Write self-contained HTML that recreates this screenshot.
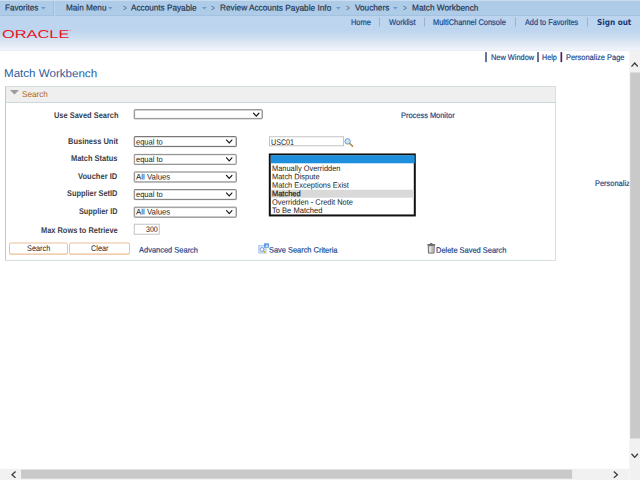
<!DOCTYPE html>
<html><head><meta charset="utf-8"><title>Match Workbench</title>
<style>
*{box-sizing:border-box;margin:0;padding:0}
html,body{width:640px;height:480px;overflow:hidden;background:#fff}
body{position:relative;font-family:"Liberation Sans",Arial,sans-serif}
.a{position:absolute;white-space:nowrap}
</style></head><body>
<div class="a" style="left:0;top:0;width:640px;height:51px;background:linear-gradient(#bcd4ed 0,#bdd5ee 30px,#c9dcf0 36px,#dce6f4 42px,#eaeff8 47px,#f0f3fa 50px,#e6e9ee 51px)"></div>
<div class="a" style="left:0;top:0;width:640px;height:16px;background:#aecbe8;border-top:1px solid #c9dcf0;border-bottom:1px solid #a3c2e2"></div>
<div class="a" style="left:5.40px;top:2px;font:8.7px/10px 'Liberation Sans',Arial,sans-serif;color:#24344c;transform:translateY(0.60px) rotate(0.03deg) scaleX(0.9341);transform-origin:0 0;-webkit-text-stroke:0.18px #24344c;">Favorites</div>
<div class="a" style="left:65.70px;top:2px;font:8.7px/10px 'Liberation Sans',Arial,sans-serif;color:#24344c;transform:translateY(0.60px) rotate(0.03deg) scaleX(0.9414);transform-origin:0 0;-webkit-text-stroke:0.18px #24344c;">Main Menu</div>
<div class="a" style="left:131.30px;top:2px;font:8.7px/10px 'Liberation Sans',Arial,sans-serif;color:#24344c;transform:translateY(0.60px) rotate(0.03deg) scaleX(0.9434);transform-origin:0 0;-webkit-text-stroke:0.18px #24344c;">Accounts Payable</div>
<div class="a" style="left:220.40px;top:2px;font:8.7px/10px 'Liberation Sans',Arial,sans-serif;color:#24344c;transform:translateY(0.60px) rotate(0.03deg) scaleX(0.9520);transform-origin:0 0;-webkit-text-stroke:0.18px #24344c;">Review Accounts Payable Info</div>
<div class="a" style="left:354.90px;top:2px;font:8.7px/10px 'Liberation Sans',Arial,sans-serif;color:#24344c;transform:translateY(0.60px) rotate(0.03deg) scaleX(0.9455);transform-origin:0 0;-webkit-text-stroke:0.18px #24344c;">Vouchers</div>
<div class="a" style="left:411.80px;top:2px;font:8.7px/10px 'Liberation Sans',Arial,sans-serif;color:#24344c;transform:translateY(0.60px) rotate(0.03deg) scaleX(0.9507);transform-origin:0 0;-webkit-text-stroke:0.18px #24344c;">Match Workbench</div>
<div class="a" style="left:122.50px;top:2px;font:9.4px/11px 'Liberation Sans',Arial,sans-serif;color:#55657c;transform:translateY(0.20px) rotate(0.03deg) scaleX(0.6728);transform-origin:0 0;">&gt;</div>
<div class="a" style="left:211.10px;top:2px;font:9.4px/11px 'Liberation Sans',Arial,sans-serif;color:#55657c;transform:translateY(0.20px) rotate(0.03deg) scaleX(0.6728);transform-origin:0 0;">&gt;</div>
<div class="a" style="left:345.60px;top:2px;font:9.4px/11px 'Liberation Sans',Arial,sans-serif;color:#55657c;transform:translateY(0.20px) rotate(0.03deg) scaleX(0.6728);transform-origin:0 0;">&gt;</div>
<div class="a" style="left:402.90px;top:2px;font:9.4px/11px 'Liberation Sans',Arial,sans-serif;color:#55657c;transform:translateY(0.20px) rotate(0.03deg) scaleX(0.6728);transform-origin:0 0;">&gt;</div>
<svg class="a" style="left:40.6px;top:6.7px" width="5" height="3" viewBox="0 0 5 3"><path d="M0 0H4.6L2.3 2.4Z" fill="#6a9bd0"/></svg>
<svg class="a" style="left:108.4px;top:6.7px" width="5" height="3" viewBox="0 0 5 3"><path d="M0 0H4.6L2.3 2.4Z" fill="#6a9bd0"/></svg>
<svg class="a" style="left:201.5px;top:6.7px" width="5" height="3" viewBox="0 0 5 3"><path d="M0 0H4.6L2.3 2.4Z" fill="#6a9bd0"/></svg>
<svg class="a" style="left:336.0px;top:6.7px" width="5" height="3" viewBox="0 0 5 3"><path d="M0 0H4.6L2.3 2.4Z" fill="#6a9bd0"/></svg>
<svg class="a" style="left:393.2px;top:6.7px" width="5" height="3" viewBox="0 0 5 3"><path d="M0 0H4.6L2.3 2.4Z" fill="#6a9bd0"/></svg>
<div class="a" style="left:0;top:0;transform:translate(53.1px,1px);width:1px;height:15px;background:#9fbfe0;"></div>
<div class="a" style="left:0;top:0;transform:translate(54.1px,1px);width:1px;height:15px;background:#bdd5ee;"></div>
<div class="a" style="left:351.20px;top:16px;font:8.4px/10px 'Liberation Sans',Arial,sans-serif;color:#174487;transform:translateY(0.50px) rotate(0.03deg) scaleX(0.8873);transform-origin:0 0;-webkit-text-stroke:0.18px #174487;">Home</div>
<div class="a" style="left:388.50px;top:16px;font:8.4px/10px 'Liberation Sans',Arial,sans-serif;color:#174487;transform:translateY(0.50px) rotate(0.03deg) scaleX(0.8992);transform-origin:0 0;-webkit-text-stroke:0.18px #174487;">Worklist</div>
<div class="a" style="left:433.40px;top:16px;font:8.4px/10px 'Liberation Sans',Arial,sans-serif;color:#174487;transform:translateY(0.50px) rotate(0.03deg) scaleX(0.8881);transform-origin:0 0;-webkit-text-stroke:0.18px #174487;">MultiChannel Console</div>
<div class="a" style="left:524.80px;top:16px;font:8.4px/10px 'Liberation Sans',Arial,sans-serif;color:#174487;transform:translateY(0.50px) rotate(0.03deg) scaleX(0.8732);transform-origin:0 0;-webkit-text-stroke:0.18px #174487;">Add to Favorites</div>
<div class="a" style="left:596.90px;top:16px;font:bold 8.2px/10px 'DejaVu Sans',sans-serif;color:#143c78;transform:translateY(0.50px) rotate(0.03deg) scaleX(0.8897);transform-origin:0 0;">Sign out</div>
<div class="a" style="left:0;top:0;transform:translate(379px,17.5px);width:1px;height:8.5px;background:#a3b1c6;"></div>
<div class="a" style="left:0;top:0;transform:translate(424px,17.5px);width:1px;height:8.5px;background:#a3b1c6;"></div>
<div class="a" style="left:0;top:0;transform:translate(515px,17.5px);width:1px;height:8.5px;background:#a3b1c6;"></div>
<div class="a" style="left:0;top:0;transform:translate(587px,17.5px);width:1px;height:8.5px;background:#a3b1c6;"></div>
<div class="a" style="left:2.30px;top:27px;font:11.3px/12px 'Liberation Sans',Arial,sans-serif;color:#e9121f;transform:translateY(0.90px) rotate(0.03deg) scaleX(1.4491);transform-origin:0 0;">ORACLE</div>
<div class="a" style="left:70px;top:30px;width:1px;height:1px;background:#ee7a86;"></div>
<div class="a" style="left:490.60px;top:52px;font:8.1px/9px 'Liberation Sans',Arial,sans-serif;color:#174487;transform:translateY(0.75px) rotate(0.03deg) scaleX(0.9122);transform-origin:0 0;-webkit-text-stroke:0.18px #174487;">New Window</div>
<div class="a" style="left:542.30px;top:52px;font:8.1px/9px 'Liberation Sans',Arial,sans-serif;color:#174487;transform:translateY(0.75px) rotate(0.03deg) scaleX(0.8831);transform-origin:0 0;-webkit-text-stroke:0.18px #174487;">Help</div>
<div class="a" style="left:565.75px;top:52px;font:8.1px/9px 'Liberation Sans',Arial,sans-serif;color:#174487;transform:translateY(0.75px) rotate(0.03deg) scaleX(0.9212);transform-origin:0 0;-webkit-text-stroke:0.18px #174487;">Personalize Page</div>
<div class="a" style="left:0;top:0;transform:translate(485.0px,52.1px);width:1.6px;height:9.5px;background:linear-gradient(90deg,#d79a63,#5a4a55 45%,#5a4a55 55%,#7aa6dc);"></div>
<div class="a" style="left:0;top:0;transform:translate(537.0px,52.1px);width:1.6px;height:9.5px;background:linear-gradient(90deg,#d79a63,#5a4a55 45%,#5a4a55 55%,#7aa6dc);"></div>
<div class="a" style="left:0;top:0;transform:translate(560.3px,52.1px);width:1.6px;height:9.5px;background:linear-gradient(90deg,#a0708a,#3a1a5a 45%,#3a1a5a 55%,#7a78c0);"></div>
<div class="a" style="left:3.75px;top:67px;font:11.4px/12px 'Liberation Sans',Arial,sans-serif;color:#2d5c9c;transform:translateY(0.10px) rotate(0.03deg) scaleX(1.0163);transform-origin:0 0;">Match Workbench</div>
<div class="a" style="left:5px;top:86px;width:551px;height:175px;border:1px solid #d5dfe2;border-left-color:#bccbd8;background:#fff"></div>
<div class="a" style="left:6px;top:87px;width:549px;height:16px;background:#efefef;border-bottom:1px solid #cbd8dc"></div>
<svg class="a" style="left:10.4px;top:90.1px" width="9" height="5" viewBox="0 0 9 5"><path d="M0 0H9L4.5 4.6Z" fill="#9b9b9b"/></svg>
<div class="a" style="left:22.20px;top:89px;font:8.4px/10px 'Liberation Sans',Arial,sans-serif;color:#b4641c;transform:translateY(0.10px) rotate(0.03deg) scaleX(0.9727);transform-origin:0 0;">Search</div>
<div class="a" style="left:53.75px;top:110px;font:bold 8.3px/10px 'Liberation Sans',Arial,sans-serif;color:#3a3e48;transform:translateY(0.00px) rotate(0.03deg) scaleX(0.8963);transform-origin:0 0;">Use Saved Search</div>
<div class="a" style="left:67.50px;top:135px;font:bold 8.3px/10px 'Liberation Sans',Arial,sans-serif;color:#3a3e48;transform:translateY(0.75px) rotate(0.03deg) scaleX(0.9032);transform-origin:0 0;">Business Unit</div>
<div class="a" style="left:70.75px;top:153px;font:bold 8.3px/10px 'Liberation Sans',Arial,sans-serif;color:#3a3e48;transform:translateY(0.25px) rotate(0.03deg) scaleX(0.8990);transform-origin:0 0;">Match Status</div>
<div class="a" style="left:78.00px;top:171px;font:bold 8.3px/10px 'Liberation Sans',Arial,sans-serif;color:#3a3e48;transform:translateY(0.00px) rotate(0.03deg) scaleX(0.9074);transform-origin:0 0;">Voucher ID</div>
<div class="a" style="left:66.75px;top:188px;font:bold 8.3px/10px 'Liberation Sans',Arial,sans-serif;color:#3a3e48;transform:translateY(0.25px) rotate(0.03deg) scaleX(0.8893);transform-origin:0 0;">Supplier SetID</div>
<div class="a" style="left:78.75px;top:206px;font:bold 8.3px/10px 'Liberation Sans',Arial,sans-serif;color:#3a3e48;transform:translateY(0.00px) rotate(0.03deg) scaleX(0.8774);transform-origin:0 0;">Supplier ID</div>
<div class="a" style="left:40.75px;top:224px;font:bold 8.3px/10px 'Liberation Sans',Arial,sans-serif;color:#3a3e48;transform:translateY(0.75px) rotate(0.03deg) scaleX(0.8947);transform-origin:0 0;">Max Rows to Retrieve</div>
<div class="a" style="left:0;top:0;transform:translate(133.75px,109.25px);width:129.3px;height:10.4px;border:1px solid #7b7b7b;border-radius:1px;background:#fff;box-shadow:inset 0 0 0 0.5px #d8d8d8"><svg style="position:absolute;right:2.2px;top:2.0px" width="7" height="5" viewBox="0 0 7 5"><path d="M0.4 0.5L3.5 3.9L6.6 0.5" fill="none" stroke="#1a1a1a" stroke-width="1.15"/></svg></div>
<div class="a" style="left:0;top:0;transform:translate(133.75px,136.1px);width:102.5px;height:10.7px;border:1px solid #6a6a6a;border-radius:1px;background:#fff;box-shadow:inset 0 0 0 0.5px #d8d8d8"><svg style="position:absolute;right:2.2px;top:2.0px" width="7" height="5" viewBox="0 0 7 5"><path d="M0.4 0.5L3.5 3.9L6.6 0.5" fill="none" stroke="#1a1a1a" stroke-width="1.15"/></svg></div>
<div class="a" style="left:136.20px;top:137px;font:8.0px/9px 'Liberation Sans',Arial,sans-serif;color:#222;transform:translateY(0.50px) rotate(0.03deg) scaleX(0.9410);transform-origin:0 0;">equal to</div>
<div class="a" style="left:0;top:0;transform:translate(133.75px,153.9px);width:102.5px;height:10.7px;border:1px solid #8a8a8a;border-radius:1px;background:#fff;box-shadow:inset 0 0 0 0.5px #d8d8d8"><svg style="position:absolute;right:2.2px;top:2.0px" width="7" height="5" viewBox="0 0 7 5"><path d="M0.4 0.5L3.5 3.9L6.6 0.5" fill="none" stroke="#1a1a1a" stroke-width="1.15"/></svg></div>
<div class="a" style="left:136.20px;top:154px;font:8.0px/9px 'Liberation Sans',Arial,sans-serif;color:#222;transform:translateY(0.90px) rotate(0.03deg) scaleX(0.9410);transform-origin:0 0;">equal to</div>
<div class="a" style="left:0;top:0;transform:translate(133.75px,171.5px);width:102.5px;height:10.7px;border:1px solid #7b7b7b;border-radius:1px;background:#fff;box-shadow:inset 0 0 0 0.5px #d8d8d8"><svg style="position:absolute;right:2.2px;top:2.0px" width="7" height="5" viewBox="0 0 7 5"><path d="M0.4 0.5L3.5 3.9L6.6 0.5" fill="none" stroke="#1a1a1a" stroke-width="1.15"/></svg></div>
<div class="a" style="left:136.20px;top:172px;font:8.0px/9px 'Liberation Sans',Arial,sans-serif;color:#222;transform:translateY(0.40px) rotate(0.03deg) scaleX(0.9800);transform-origin:0 0;">All Values</div>
<div class="a" style="left:0;top:0;transform:translate(133.75px,189.1px);width:102.5px;height:10.7px;border:1px solid #7b7b7b;border-radius:1px;background:#fff;box-shadow:inset 0 0 0 0.5px #d8d8d8"><svg style="position:absolute;right:2.2px;top:2.0px" width="7" height="5" viewBox="0 0 7 5"><path d="M0.4 0.5L3.5 3.9L6.6 0.5" fill="none" stroke="#1a1a1a" stroke-width="1.15"/></svg></div>
<div class="a" style="left:136.20px;top:189px;font:8.0px/9px 'Liberation Sans',Arial,sans-serif;color:#222;transform:translateY(0.90px) rotate(0.03deg) scaleX(0.9410);transform-origin:0 0;">equal to</div>
<div class="a" style="left:0;top:0;transform:translate(133.75px,206.7px);width:102.5px;height:10.7px;border:1px solid #7b7b7b;border-radius:1px;background:#fff;box-shadow:inset 0 0 0 0.5px #d8d8d8"><svg style="position:absolute;right:2.2px;top:2.0px" width="7" height="5" viewBox="0 0 7 5"><path d="M0.4 0.5L3.5 3.9L6.6 0.5" fill="none" stroke="#1a1a1a" stroke-width="1.15"/></svg></div>
<div class="a" style="left:136.20px;top:207px;font:8.0px/9px 'Liberation Sans',Arial,sans-serif;color:#222;transform:translateY(0.40px) rotate(0.03deg) scaleX(0.9800);transform-origin:0 0;">All Values</div>
<div class="a" style="left:0;top:0;transform:translate(133.75px,223.75px);width:26.4px;height:10.5px;border:1px solid #c4c4c4;background:#fff"></div>
<div class="a" style="left:145.75px;top:224px;font:8.0px/9px 'Liberation Sans',Arial,sans-serif;color:#222;transform:translateY(0.70px) rotate(0.03deg) scaleX(0.8795);transform-origin:0 0;">300</div>
<div class="a" style="left:0;top:0;transform:translate(269px,136.25px);width:74.8px;height:10.4px;border:1px solid #c4c4c4;background:#fff"></div>
<div class="a" style="left:270.50px;top:137px;font:8.2px/9px 'Liberation Sans',Arial,sans-serif;color:#222;transform:translateY(0.70px) rotate(0.03deg) scaleX(0.8697);transform-origin:0 0;">USC01</div>
<svg class="a" style="left:344.2px;top:137.7px" width="10" height="9" viewBox="0 0 10 9"><circle cx="3.6" cy="3.4" r="2.7" fill="#cfe6f7" stroke="#6b9bc8" stroke-width="1"/><path d="M5.8 5.6L8.6 8.2" stroke="#b08a3a" stroke-width="1.5" stroke-linecap="round"/></svg>
<div class="a" style="left:0;top:0;transform:translate(268.8px,153.45px);width:147.3px;height:63.45px;border:2px solid #101010;background:#fff"></div>
<div class="a" style="left:0;top:0;transform:translate(270.7px,155.3px);width:143.6px;height:8.2px;background:#1e8fdc;"></div>
<div class="a" style="left:0;top:0;transform:translate(270.9px,189.7px);width:143.1px;height:8.2px;background:#d9d9d9;"></div>
<div class="a" style="left:271.60px;top:163px;font:7.9px/9px 'Liberation Sans',Arial,sans-serif;color:#1c1c1c;transform:translateY(0.90px) rotate(0.03deg) scaleX(0.9399);transform-origin:0 0;">Manually Overridden</div>
<div class="a" style="left:271.60px;top:172px;font:7.9px/9px 'Liberation Sans',Arial,sans-serif;color:#1c1c1c;transform:translateY(0.30px) rotate(0.03deg) scaleX(0.9429);transform-origin:0 0;">Match Dispute</div>
<div class="a" style="left:271.60px;top:180px;font:7.9px/9px 'Liberation Sans',Arial,sans-serif;color:#1c1c1c;transform:translateY(0.80px) rotate(0.03deg) scaleX(0.9426);transform-origin:0 0;">Match Exceptions Exist</div>
<div class="a" style="left:271.60px;top:189px;font:7.9px/9px 'Liberation Sans',Arial,sans-serif;color:#1c1c1c;transform:translateY(0.20px) rotate(0.03deg) scaleX(0.9440);transform-origin:0 0;-webkit-text-stroke:0.2px #1c1c1c;">Matched</div>
<div class="a" style="left:271.60px;top:197px;font:7.9px/9px 'Liberation Sans',Arial,sans-serif;color:#1c1c1c;transform:translateY(0.70px) rotate(0.03deg) scaleX(0.9411);transform-origin:0 0;">Overridden - Credit Note</div>
<div class="a" style="left:271.60px;top:206px;font:7.9px/9px 'Liberation Sans',Arial,sans-serif;color:#1c1c1c;transform:translateY(0.10px) rotate(0.03deg) scaleX(0.9565);transform-origin:0 0;">To Be Matched</div>
<div class="a" style="left:0;top:0;transform:translate(9px,242.5px);width:58.5px;height:12.1px;border:1px solid #ecbf95;border-radius:2px;background:#fff;box-shadow:0 0.5px 0.5px #f3dcc6"></div>
<div class="a" style="left:0;top:0;transform:translate(69px,242.5px);width:60.5px;height:12.1px;border:1px solid #ecbf95;border-radius:2px;background:#fff;box-shadow:0 0.5px 0.5px #f3dcc6"></div>
<div class="a" style="left:26.75px;top:244px;font:8.2px/9px 'Liberation Sans',Arial,sans-serif;color:#222;transform:translateY(0.30px) rotate(0.03deg) scaleX(0.8944);transform-origin:0 0;">Search</div>
<div class="a" style="left:90.50px;top:244px;font:8.2px/9px 'Liberation Sans',Arial,sans-serif;color:#222;transform:translateY(0.30px) rotate(0.03deg) scaleX(0.8929);transform-origin:0 0;">Clear</div>
<div class="a" style="left:138.60px;top:245px;font:7.9px/9px 'Liberation Sans',Arial,sans-serif;color:#174487;transform:translateY(0.60px) rotate(0.03deg) scaleX(0.9476);transform-origin:0 0;-webkit-text-stroke:0.18px #174487;">Advanced Search</div>
<div class="a" style="left:269.00px;top:245px;font:7.9px/9px 'Liberation Sans',Arial,sans-serif;color:#174487;transform:translateY(0.60px) rotate(0.03deg) scaleX(0.9408);transform-origin:0 0;-webkit-text-stroke:0.18px #174487;">Save Search Criteria</div>
<div class="a" style="left:436.40px;top:245px;font:7.9px/9px 'Liberation Sans',Arial,sans-serif;color:#174487;transform:translateY(0.70px) rotate(0.03deg) scaleX(0.9443);transform-origin:0 0;-webkit-text-stroke:0.18px #174487;">Delete Saved Search</div>
<div class="a" style="left:401.20px;top:111px;font:8.0px/9px 'Liberation Sans',Arial,sans-serif;color:#174487;transform:translateY(0.00px) rotate(0.03deg) scaleX(0.9291);transform-origin:0 0;-webkit-text-stroke:0.18px #174487;">Process Monitor</div>
<div class="a" style="left:595.00px;top:178px;font:8.1px/9px 'Liberation Sans',Arial,sans-serif;color:#174487;transform:translateY(0.90px) rotate(0.03deg) scaleX(0.9212);transform-origin:0 0;-webkit-text-stroke:0.18px #174487;">Personalize</div>
<svg class="a" style="left:257.8px;top:242.6px" width="12" height="11" viewBox="0 0 12 11"><rect x="0.7" y="2.5" width="7.4" height="7.6" fill="#d3e3f8" stroke="#a6c5ee" stroke-width="0.8"/><rect x="6" y="0.3" width="5" height="4.4" fill="#5f9ae3"/><path d="M7.3 3.7L8.9 1.5L10.3 3.7" fill="#e6f0fb"/><circle cx="4" cy="6.5" r="1.9" fill="#fff" stroke="#6a86b0" stroke-width="0.8"/><path d="M5.5 7.8L7 9.5" stroke="#d1a516" stroke-width="1.2"/></svg>
<svg class="a" style="left:427px;top:242.6px" width="9" height="11" viewBox="0 0 9 11"><rect x="3" y="0.2" width="2.4" height="1.2" rx="0.4" fill="#444"/><rect x="0.3" y="1" width="7.9" height="1.6" rx="0.6" fill="#6a6a6a"/><path d="M1.2 2.6H7.3L7 10.1H1.5Z" fill="#d2d2d2" stroke="#606060" stroke-width="0.9"/><path d="M3.2 3.5V9.4" stroke="#f2f2f2" stroke-width="0.8"/><path d="M5.2 3.5V9.4" stroke="#9a9a9a" stroke-width="0.7"/></svg>
<div class="a" style="left:0;top:0;transform:translate(629.4px,51px);width:10.6px;height:429px;background:#f1f1f1;"></div>
<div class="a" style="left:0;top:0;transform:translate(630.2px,72.5px);width:9.8px;height:365.5px;background:#c9c9c9;"></div>
<div class="a" style="left:0;top:0;transform:translate(0px,468.8px);width:629.4px;height:11.2px;background:#f1f1f1;"></div>
<div class="a" style="left:0;top:0;transform:translate(21.1px,469.7px);width:551.1px;height:9px;background:#c9c9c9;"></div>
<svg class="a" style="left:631px;top:62.2px" width="7.4" height="5.4" viewBox="0 0 7.4 5.4"><path d="M0.5 4.6L3.7 1L6.9 4.6" fill="none" stroke="#3a3a3a" stroke-width="1.3"/></svg>
<svg class="a" style="left:631.2px;top:453px" width="7.4" height="5.4" viewBox="0 0 7.4 5.4"><path d="M0.5 0.8L3.7 4.4L6.9 0.8" fill="none" stroke="#3a3a3a" stroke-width="1.3"/></svg>
<svg class="a" style="left:10.9px;top:470.8px" width="5.4" height="7.4" viewBox="0 0 5.4 7.4"><path d="M4.6 0.5L1 3.7L4.6 6.9" fill="none" stroke="#3a3a3a" stroke-width="1.3"/></svg>
<svg class="a" style="left:613.2px;top:470.6px" width="5.4" height="7.4" viewBox="0 0 5.4 7.4"><path d="M0.8 0.5L4.4 3.7L0.8 6.9" fill="none" stroke="#3a3a3a" stroke-width="1.3"/></svg>
</body></html>
